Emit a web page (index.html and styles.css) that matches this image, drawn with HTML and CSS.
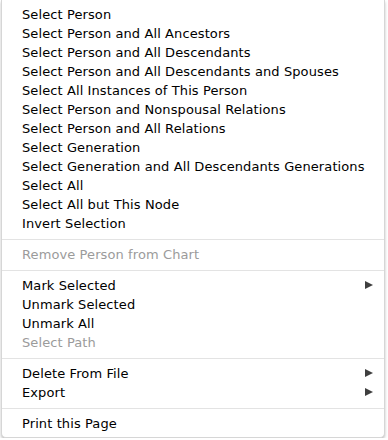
FILE: index.html
```html
<!DOCTYPE html>
<html lang="en">
<head>
    <meta charset="UTF-8">
    <meta name="viewport" content="width=device-width, initial-scale=1.0">
    <title>Chart Menu</title>
    <link rel="stylesheet" href="styles.css">
</head>
<body>
    <div class="menu">
        <div class="item">Select Person</div>
        <div class="item">Select Person and All Ancestors</div>
        <div class="item">Select Person and All Descendants</div>
        <div class="item">Select Person and All Descendants and Spouses</div>
        <div class="item">Select All Instances of This Person</div>
        <div class="item">Select Person and Nonspousal Relations</div>
        <div class="item">Select Person and All Relations</div>
        <div class="item">Select Generation</div>
        <div class="item">Select Generation and All Descendants Generations</div>
        <div class="item">Select All</div>
        <div class="item">Select All but This Node</div>
        <div class="item">Invert Selection</div>
        <div class="separator"></div>
        <div class="item disabled">Remove Person from Chart</div>
        <div class="separator"></div>
        <div class="item submenu">Mark Selected</div>
        <div class="item">Unmark Selected</div>
        <div class="item">Unmark All</div>
        <div class="item disabled">Select Path</div>
        <div class="separator"></div>
        <div class="item submenu">Delete From File</div>
        <div class="item submenu">Export</div>
        <div class="separator"></div>
        <div class="item">Print this Page</div>
    </div>
</body>
</html>
```

FILE: styles.css
```css
body {
    margin: 0;
    background: #ffffff;
    font-family: "Lucida Grande", "DejaVu Sans", sans-serif;
}
.menu {
    width: 384px;
    margin-left: 1px;
    padding: 5px 0 4px 0;
    background: #ffffff;
    border: 1px solid #d6d6d6;
    border-top: none;
    border-radius: 0 0 5px 5px;
    box-shadow: 0 2px 3px rgba(0, 0, 0, 0.25);
    box-sizing: border-box;
}
.item {
    position: relative;
    height: 19px;
    line-height: 19px;
    padding-left: 20px;
    font-size: 13px;
    letter-spacing: 0.1px;
    color: #000000;
    white-space: nowrap;
}
.disabled {
    color: #9b9b9b;
}
.submenu::after {
    content: "";
    position: absolute;
    right: 11px;
    top: 5px;
    border-left: 8px solid #3f3f3f;
    border-top: 4.5px solid transparent;
    border-bottom: 4.5px solid transparent;
}
.separator {
    height: 1px;
    margin: 6px 0 5px 0;
    background: #e3e3e3;
}
```
